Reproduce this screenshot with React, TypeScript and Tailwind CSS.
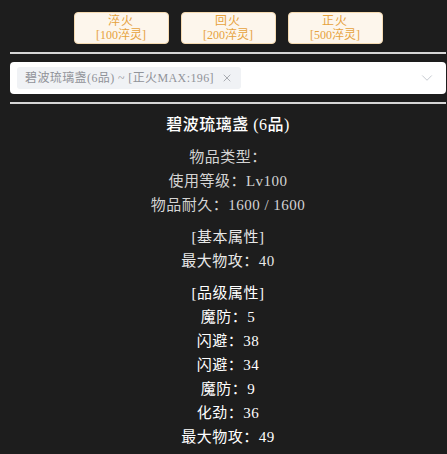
import { ChevronDown, X } from 'lucide-react';

const font = { fontFamily: '"Liberation Serif", "Noto Sans CJK SC", serif' };

const buttons = [
  { name: '淬火', cost: '[100淬灵]' },
  { name: '回火', cost: '[200淬灵]' },
  { name: '正火', cost: '[500淬灵]' },
];

const baseInfo = ['物品类型：', '使用等级：Lv100', '物品耐久：1600 / 1600'];
const gradeAttrs = ['魔防：5', '闪避：38', '闪避：34', '魔防：9', '化劲：36', '最大物攻：49'];

export default function App() {
  return (
    <div className="min-h-[454px] w-[447px] bg-[#1d1d1d] pt-[12px] pl-[10px] pr-[1px]" style={font}>
      {/* refine buttons */}
      <div className="flex justify-center gap-[12px]">
        {buttons.map((b) => (
          <button
            key={b.name}
            className="flex h-[32px] w-[95px] flex-col items-center justify-center rounded-[4px] border border-[#f5dab1] bg-[#fdf6ec] text-[12px] leading-[14px] text-[#e6a23c]"
          >
            <span className="tracking-[1px]">{b.name}</span>
            <span>{b.cost}</span>
          </button>
        ))}
      </div>

      <div className="mt-[8px] h-[2px] bg-[#d6d6d6]" />

      {/* item select */}
      <div className="mt-[8px] flex h-[32px] items-center rounded-[4px] bg-white pl-[7px] pr-[10px]">
        <span className="flex h-[22px] items-center gap-[7px] rounded-[3px] bg-[#f0f2f5] pl-[8px] pr-[8px] text-[12px] tracking-[0.4px] text-[#909399]">
          碧波琉璃盏(6品) ~ [正火MAX:196]
          <X size={12} strokeWidth={1.5} />
        </span>
        <ChevronDown size={18} strokeWidth={1.2} className="ml-auto text-[#c0c4cc]" />
      </div>

      <div className="mt-[8px] h-[2px] bg-[#d6d6d6]" />

      {/* item detail */}
      <div className="mt-[9px] flex flex-col items-center pb-[5px] text-[15px] leading-[24px] tracking-[0.5px]">
        <div className="text-[16px] font-medium text-white">碧波琉璃盏 (6品)</div>

        <div className="mt-[8px] flex flex-col items-center text-[#d4d4d4]">
          {baseInfo.map((t) => (
            <div key={t}>{t}</div>
          ))}
        </div>

        <div className="mt-[8px] flex flex-col items-center text-[#e8e8e8]">
          <div>[基本属性]</div>
          <div>最大物攻：40</div>
        </div>

        <div className="mt-[8px] flex flex-col items-center text-white">
          <div>[品级属性]</div>
          {gradeAttrs.map((t, i) => (
            <div key={i}>{t}</div>
          ))}
        </div>
      </div>
    </div>
  );
}
